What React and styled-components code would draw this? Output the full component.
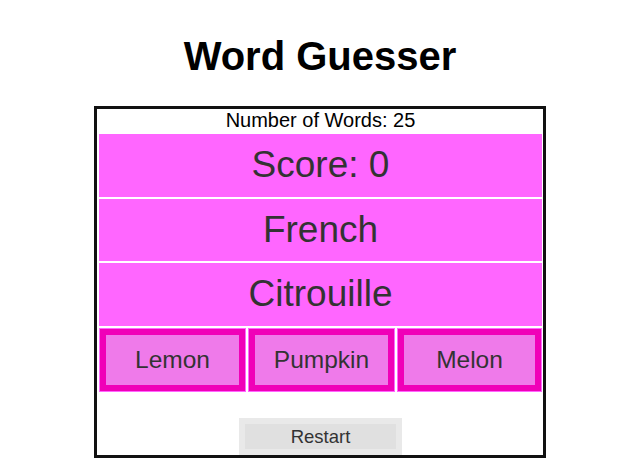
import React from 'react';
import styled, { createGlobalStyle } from 'styled-components';

const GlobalStyle = createGlobalStyle`
  body {
    margin: 0;
    font-family: "Liberation Sans", Arial, sans-serif;
    background: #fff;
  }
`;

const Page = styled.div`
  display: flex;
  flex-direction: column;
  align-items: center;
  padding-left: 22px;
`;

const Title = styled.h1`
  margin: 33px 0 27px;
  font-size: 40px;
  font-weight: bold;
  color: #000;
  line-height: 46px;
`;

const Board = styled.div`
  width: 443px;
  height: 346px;
  border: 3px solid #111;
  padding: 0 1px 0 2px;
  box-sizing: content-box;
  display: flex;
  flex-direction: column;
  overflow: hidden;
`;

const Count = styled.div`
  height: 23px;
  line-height: 23px;
  font-size: 20px;
  text-align: center;
  color: #000;
  margin-bottom: 2px;
`;

const Row = styled.div`
  height: 63px;
  line-height: 61px;
  font-size: 37px;
  text-align: center;
  color: #333;
  background: #ff66ff;
  margin-bottom: 2px;
`;

const Choices = styled.div`
  display: grid;
  grid-template-columns: 147px 147px 145px;
  gap: 2px;
`;

const Cell = styled.div`
  background: #ff66ff;
  padding: 1px;
`;

const Choice = styled.button`
  display: block;
  width: 100%;
  height: 62px;
  border: 6px solid #f000b8;
  background: #ef7aea;
  color: #333;
  font-family: "Liberation Sans", Arial, sans-serif;
  font-size: 24.5px;
  padding: 0;
  cursor: pointer;
`;

const Footer = styled.div`
  display: flex;
  justify-content: center;
  padding-top: 26px;
`;

const Restart = styled.button`
  width: 163px;
  height: 37px;
  border: 6px solid #e9e9e9;
  background: #e0e0e0;
  color: #333;
  font-family: "Liberation Sans", Arial, sans-serif;
  font-size: 18.5px;
  padding: 0;
  line-height: 25px;
`;

const choices = ['Lemon', 'Pumpkin', 'Melon'];

export default function App() {
  return (
    <Page>
      <GlobalStyle />
      <Title>Word Guesser</Title>
      <Board>
        <Count>Number of Words: 25</Count>
        <Row>Score: 0</Row>
        <Row>French</Row>
        <Row>Citrouille</Row>
        <Choices>
          {choices.map(word => (
            <Cell key={word}>
              <Choice>{word}</Choice>
            </Cell>
          ))}
        </Choices>
        <Footer>
          <Restart>Restart</Restart>
        </Footer>
      </Board>
    </Page>
  );
}
